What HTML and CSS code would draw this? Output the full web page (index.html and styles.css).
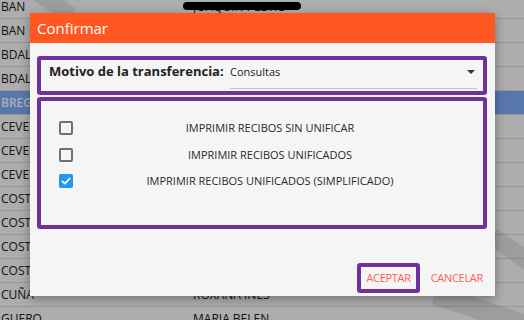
FILE: index.html
```html
<!DOCTYPE html>
<html lang="es">
<head>
<meta charset="utf-8">
<title>Confirmar</title>
<link rel="stylesheet" href="styles.css">
</head>
<body>
<div class="page">
  <div class="grid">
    <div class="row"><span class="c1">BAN</span><span class="c2">JOAQUIN PEDRO</span></div>
    <div class="row"><span class="c1">BAN</span></div>
    <div class="row"><span class="c1">BDALA</span></div>
    <div class="row"><span class="c1">BDALA</span></div>
    <div class="row sel"><span class="c1">BREGO</span></div>
    <div class="row"><span class="c1">CEVEDO</span></div>
    <div class="row"><span class="c1">CEVEDO</span></div>
    <div class="row"><span class="c1">CEVEDO</span></div>
    <div class="row"><span class="c1">COSTA</span></div>
    <div class="row"><span class="c1">COSTA</span></div>
    <div class="row"><span class="c1">COSTA</span></div>
    <div class="row"><span class="c1">COSTA</span></div>
    <div class="row"><span class="c1">CUÑA</span><span class="c2">ROXANA INES</span></div>
    <div class="row"><span class="c1">GUERO</span><span class="c2">MARIA BELEN</span></div>
  </div>
  <div class="redact"></div>
  <div class="backdrop">
    <div class="wm wm1"></div>
    <div class="wm wm2"></div>
    <div class="wm wm3"></div>
  </div>

  <div class="dialog">
    <div class="dlg-head">Confirmar</div>
    <div class="dlg-body">
      <div class="box box-motivo">
        <span class="motivo-label">Motivo de la transferencia:</span>
        <div class="select">
          <span class="select-value">Consultas</span>
          <span class="select-arrow"></span>
        </div>
      </div>
      <div class="box box-opts">
        <div class="opt">
          <span class="cb"></span>
          <span class="opt-label">IMPRIMIR RECIBOS SIN UNIFICAR</span>
        </div>
        <div class="opt">
          <span class="cb"></span>
          <span class="opt-label">IMPRIMIR RECIBOS UNIFICADOS</span>
        </div>
        <div class="opt">
          <span class="cb cb-on"><svg viewBox="0 0 14 14" width="14" height="14"><path d="M3.4 7.3 L5.9 9.7 L10.7 4.5" fill="none" stroke="#fff" stroke-width="1.7" stroke-linecap="round" stroke-linejoin="round"/></svg></span>
          <span class="opt-label">IMPRIMIR RECIBOS UNIFICADOS (SIMPLIFICADO)</span>
        </div>
      </div>
    </div>
    <div class="dlg-foot">
      <button class="btn btn-ok">ACEPTAR</button>
      <button class="btn btn-cancel">CANCELAR</button>
    </div>
  </div>
</div>
</body>
</html>
```

FILE: styles.css
```css
* { box-sizing: border-box; }

html, body {
  margin: 0;
  padding: 0;
}

body {
  width: 524px;
  height: 320px;
  overflow: hidden;
  font-family: "Open Sans", "DejaVu Sans", sans-serif;
  background: #ffffff;
}

.page {
  position: relative;
  width: 524px;
  height: 320px;
  overflow: hidden;
}

/* background table */
.grid {
  margin-top: -5px;
}

.row {
  display: flex;
  align-items: center;
  height: 24px;
  border-bottom: 1px solid #e0e0e0;
  font-size: 12px;
  color: #202020;
  background: #ffffff;
}

.row.sel {
  background: #82b1ff;
  color: #ffffff;
  font-weight: 600;
}

.c1 {
  flex: 0 0 193px;
  padding-left: 1px;
  white-space: nowrap;
  overflow: hidden;
}

.c2 {
  white-space: nowrap;
}

.redact {
  position: absolute;
  left: 183px;
  top: 2px;
  width: 118px;
  height: 8px;
  border-radius: 4px;
  background: #000;
}

.backdrop {
  position: absolute;
  inset: 0;
  background: rgba(0, 0, 0, 0.32);
}

.wm {
  position: absolute;
  background: rgba(0, 0, 0, 0.09);
  border-radius: 3px;
}

.wm1 {
  left: 28px;
  top: -6px;
  width: 48px;
  height: 17px;
  transform: rotate(35deg);
}

.wm2 {
  left: 486px;
  top: 244px;
  width: 60px;
  height: 18px;
  transform: rotate(35deg);
}

.wm3 {
  left: 432px;
  top: 302px;
  width: 110px;
  height: 20px;
  transform: rotate(18deg);
}

/* dialog */
.dialog {
  position: absolute;
  left: 30px;
  top: 13px;
  width: 465px;
  background: #f5f5f5;
  box-shadow: 0 3px 10px rgba(0, 0, 0, 0.35);
}

.dlg-head {
  height: 30px;
  background: #ff5722;
  color: #ffffff;
  font-size: 15px;
  line-height: 30px;
  padding-left: 7px;
}

.dlg-body {
  padding: 13px 8px 0 7px;
}

.box {
  border: 4px solid #7030a0;
  border-radius: 3px;
}

.box-motivo {
  height: 39px;
  display: flex;
  align-items: flex-start;
  padding: 3px 6px 0 8px;
}

.motivo-label {
  flex: 0 0 181px;
  font-size: 13px;
  font-weight: 700;
  line-height: 17px;
  color: #222222;
  white-space: nowrap;
}

.select {
  flex: 1;
  height: 26px;
  display: flex;
  justify-content: space-between;
  align-items: flex-start;
  border-bottom: 1px solid #c4c4c4;
}

.select-value {
  font-size: 11px;
  line-height: 18px;
  color: #222222;
}

.select-arrow {
  width: 0;
  height: 0;
  margin: 7px 2px 0 0;
  border-left: 4px solid transparent;
  border-right: 4px solid transparent;
  border-top: 4px solid #333333;
}

.box-opts {
  height: 132px;
  margin-top: 2px;
  padding: 14px 16px 0 18px;
}

.opt {
  display: flex;
  align-items: center;
  height: 26.5px;
}

.cb {
  flex: 0 0 14px;
  width: 14px;
  height: 14px;
  border: 2px solid #707070;
  border-radius: 2px;
}

.cb-on {
  border: none;
  background: #2196f3;
  display: flex;
}

.opt-label {
  flex: 1;
  text-align: center;
  font-size: 11px;
  line-height: 16px;
  color: #2a2a2a;
}

.dlg-foot {
  display: flex;
  justify-content: flex-end;
  gap: 2px;
  padding: 34px 3px 3px 0;
}

.btn {
  height: 30px;
  padding: 0 5px;
  border: 4px solid transparent;
  border-radius: 3px;
  background: transparent;
  font-family: "Open Sans", "DejaVu Sans", sans-serif;
  font-size: 11px;
  line-height: 22px;
  letter-spacing: -0.3px;
  color: #ff5c5c;
}

.btn-ok {
  border-color: #7030a0;
}
```
